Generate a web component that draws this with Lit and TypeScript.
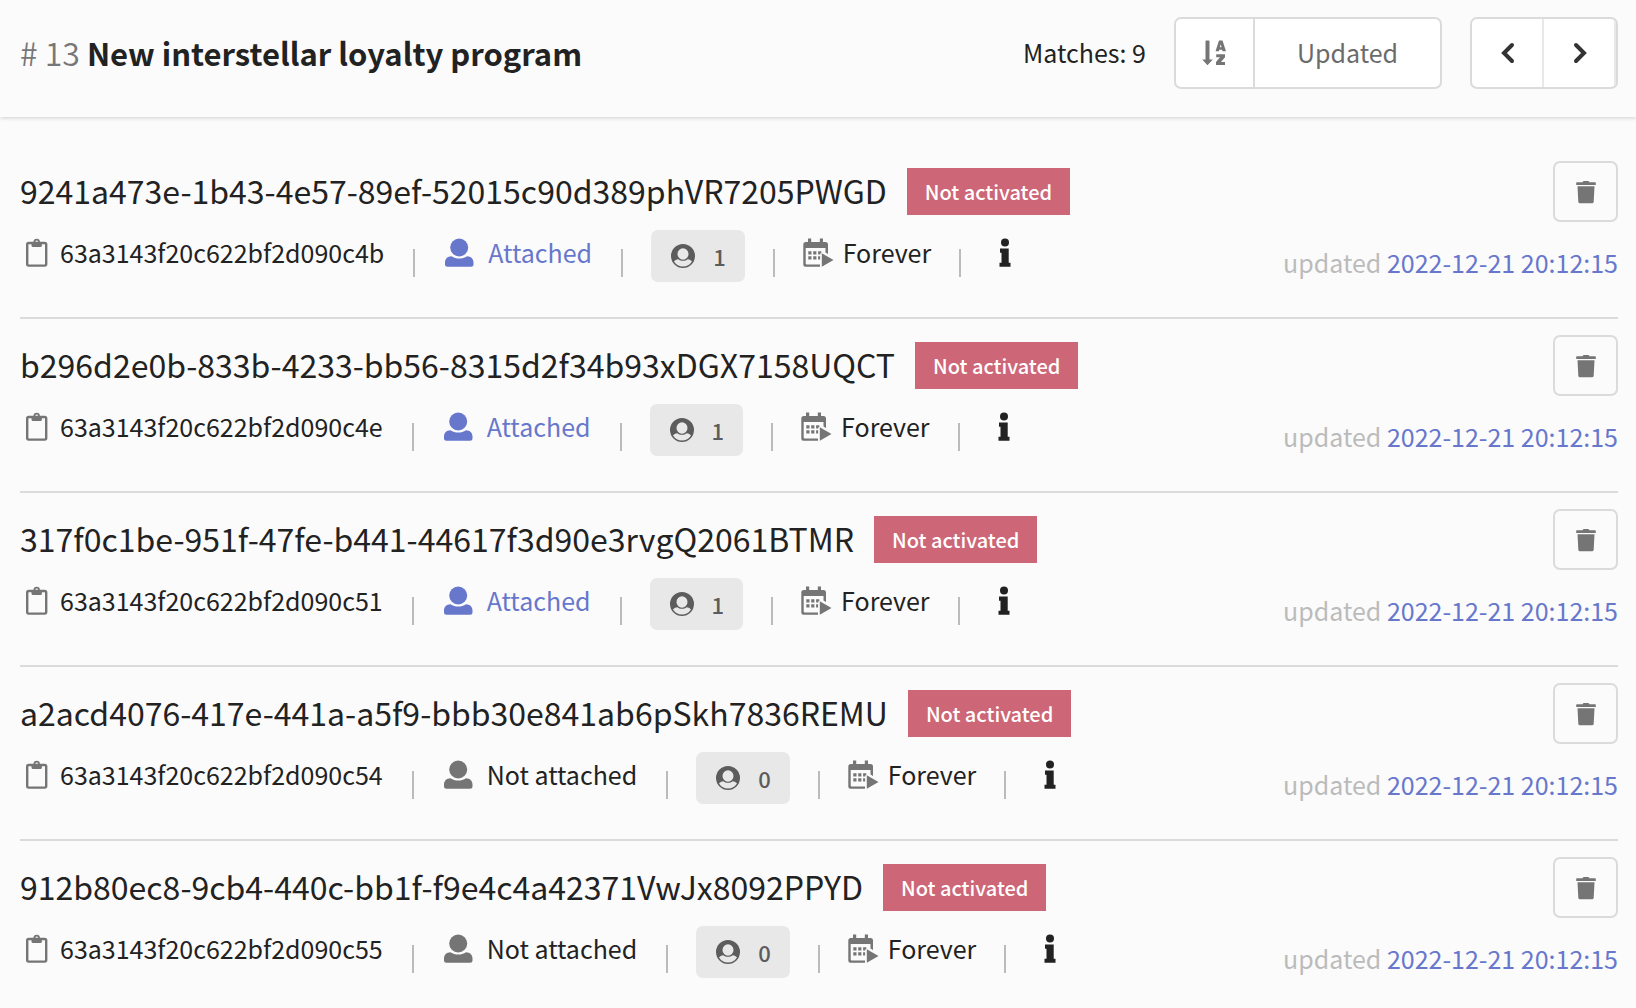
import { LitElement, html, css, svg } from "lit";
import { customElement, property } from "lit/decorators.js";

interface Code {
  code: string;
  id: string;
  attached: boolean;
  uses: number;
  updated: string;
}

const STAMP = "2022-12-21 20:12:15";

const CODES: Code[] = [
  { code: "9241a473e-1b43-4e57-89ef-52015c90d389phVR7205PWGD", id: "63a3143f20c622bf2d090c4b", attached: true, uses: 1, updated: STAMP },
  { code: "b296d2e0b-833b-4233-bb56-8315d2f34b93xDGX7158UQCT", id: "63a3143f20c622bf2d090c4e", attached: true, uses: 1, updated: STAMP },
  { code: "317f0c1be-951f-47fe-b441-44617f3d90e3rvgQ2061BTMR", id: "63a3143f20c622bf2d090c51", attached: true, uses: 1, updated: STAMP },
  { code: "a2acd4076-417e-441a-a5f9-bbb30e841ab6pSkh7836REMU", id: "63a3143f20c622bf2d090c54", attached: false, uses: 0, updated: STAMP },
  { code: "912b80ec8-9cb4-440c-bb1f-f9e4c4a42371VwJx8092PPYD", id: "63a3143f20c622bf2d090c55", attached: false, uses: 0, updated: STAMP },
];

const icon = (w: number, h: number, body: unknown) => html`<svg
  class="icon" width=${w} height=${h} viewBox="0 0 ${w} ${h}" fill="currentColor" aria-hidden="true">${body}</svg>`;

const clipboardIcon = icon(22, 30, svg`
  <rect fill="none" stroke="currentColor" stroke-width="2.400" x="1.200" y="5" width="19" height="22.600" rx="1.500"/>
  <path fill-rule="evenodd" d="M5.500 4h2a3.200 3.200 0 0 1 6.400 0h2v3.500a1.500 1.500 0 0 1-1.500 1.500H7a1.500 1.500 0 0 1-1.500-1.500zM10.700 2.500a1.300 1.300 0 1 0 0 2.600a1.300 1.300 0 0 0 0-2.600z"/>`);

const userIcon = icon(30, 30, svg`
  <circle cx="15.200" cy="9.500" r="9"/>
  <path d="M7.500 18.200c4.500 3.100 11 3.100 15.500 0c4 .3 6.500 2.500 6.500 6.300v1.700a2.500 2.500 0 0 1-2.500 2.500H3.500A2.500 2.500 0 0 1 1 26.200v-1.700c0-3.800 2.500-6 6.500-6.300z"/>`);

const usesIcon = icon(24, 24, svg`
  <path fill-rule="evenodd" d="M12 0a12 12 0 1 0 0 24a12 12 0 0 0 0-24zM12 4.200a5.500 5.800 0 0 1 5.500 5.800a5.500 5.800 0 0 1-11 0a5.500 5.800 0 0 1 5.500-5.800zM7.300 15.300c2.800 2 6.600 2 9.400 0c1.900.3 3.400 1.100 4.300 2.300a10.600 10.600 0 0 1-18 0c.9-1.200 2.400-2 4.300-2.300z"/>`);

const calendarIcon = icon(31, 30, svg`
  <path fill-rule="evenodd" d="M5 .5h3.200V4h8.600V.5H20V4h2.500A2.500 2.500 0 0 1 25 6.500V16l-2.500-1.500V10H2.700v15.500a1 1 0 0 0 1 1H17v2.300H2.500A2.200 2.200 0 0 1 .3 26.500v-20A2.500 2.500 0 0 1 2.800 4H5z"/>
  <path d="M5.300 13.200h3.200v3.200H5.300zM10.200 13.200h3.200v3.200h-3.200zM15.100 13.200h3.200v2h-1v1.200h-2.200zM5.300 18.200h3.200v3.200H5.300zM10.200 18.200h3.200v3.200h-3.200zM15.100 18.200h2v3.200h-2z"/>
  <path d="M18.800 15.300L30.500 22L18.800 28.700z"/>`);

const infoIcon = icon(12, 30, svg`
  <circle cx="6" cy="4.500" r="4"/>
  <path d="M1 10.500h8.700v14.200h1.800v4H.5v-4h2v-10H1z"/>`);

const sortIcon = icon(24, 26, svg`
  <path d="M3.500 1.200a.8.8 0 0 1 .8-.8h2.400a.8.8 0 0 1 .8.8V19.500h3.300L5.500 25.200L.2 19.500h3.300z"/>
  <path fill-rule="evenodd" d="M17 .5h3.500L24 11.300h-3.400l-.5-1.600h-2.800l-.5 1.600h-3.300zM18.700 4.300L17.900 7.300h1.600z"/>
  <path d="M14.200 14.300h8.800v3l-4 4.700h4v3h-9v-3l4-4.700h-3.800z"/>`);

const prevIcon = icon(14, 22, svg`<path fill="none" stroke="currentColor" stroke-width="4" stroke-linecap="round" d="M11 3L3 11L11 19"/>`);
const nextIcon = icon(14, 22, svg`<path fill="none" stroke="currentColor" stroke-width="4" stroke-linecap="round" d="M3 3L11 11L3 19"/>`);

const trashIcon = icon(20, 24, svg`
  <path d="M.8 2.300h5.700L7.500 1h5l1 1.300h5.700a.6.6 0 0 1 .6.6V5H.2V2.900a.6.6 0 0 1 .6-.6z"/>
  <path d="M1.500 6.300h17L17.700 21.800a1.700 1.700 0 0 1-1.700 1.500H4a1.700 1.700 0 0 1-1.700-1.500z"/>`);

@customElement("code-row")
class CodeRow extends LitElement {
  @property({ attribute: false }) item!: Code;

  static styles = css`
    :host { display: flex; justify-content: space-between; padding: 16px 0 33px; border-bottom: 2px solid #dbdbdb; }
    .icon { display: block; flex: none; }
    .heading { display: flex; align-items: center; height: 60px; gap: 20px; }
    .code { margin: 0; font-size: 32px; line-height: 56px; padding-bottom: 2px; font-weight: 400; }
    .badge { background: #cd6676; color: #fff; font-size: 20px; font-weight: 500; line-height: 47px; padding: 0 18px; }
    .meta { display: flex; align-items: flex-start; margin-top: 9px; }
    .cell { display: flex; align-items: center; height: 46px; color: #222; text-decoration: none; line-height: 44px; }
    .cell .label { padding-bottom: 2px; }
    .cell .icon { color: #757575; }
    .id { gap: 12px; padding: 0 1px 0 6px; }
    .owner { gap: 14px; padding: 0 1px; }
    .linked, .cell.linked .icon { color: #6777cc; }
    .period { gap: 9px; }
    .divider { width: 2px; height: 28px; margin: 19px 28px 0; background: #bbb; }
    .uses { display: flex; align-items: center; gap: 18px; height: 52px; padding: 0 19px 0 20px; border-radius: 7px; background: #e8e8e8; color: #5c5c5c; font-size: 22px; font-weight: 500; line-height: 52px; }
    .info { display: flex; align-items: center; height: 46px; padding: 0 10px; border: 0; background: none; color: #222; }
    .side { display: flex; flex-direction: column; align-items: flex-end; }
    .remove { display: flex; align-items: center; justify-content: center; width: 65px; height: 61px; padding: 0; border: 2px solid #dbdbdb; border-radius: 7px; background: none; color: #757575; }
    .updated { margin: 18px 0 0; line-height: 44px; color: #bbb; }
    .time { color: #6777cc; text-decoration: none; }
  `;

  render() {
    const c = this.item;
    const owner = c.attached
      ? html`<a class="cell owner linked" href="#owner">${userIcon}<span class="label">Attached</span></a>`
      : html`<span class="cell owner">${userIcon}<span class="label">Not attached</span></span>`;
    return html`
      <div class="main">
        <div class="heading">
          <h2 class="code">${c.code}</h2>
          <span class="badge">Not activated</span>
        </div>
        <div class="meta">
          <span class="cell id">${clipboardIcon}<span class="label">${c.id}</span></span>
          <span class="divider"></span>
          ${owner}
          <span class="divider"></span>
          <span class="uses">${usesIcon}<span>${c.uses}</span></span>
          <span class="divider"></span>
          <span class="cell period">${calendarIcon}<span class="label">Forever</span></span>
          <span class="divider"></span>
          <button class="info" type="button" aria-label="Details">${infoIcon}</button>
        </div>
      </div>
      <div class="side">
        <button class="remove" type="button" aria-label="Delete">${trashIcon}</button>
        <p class="updated">updated <a class="time" href="#history">${c.updated}</a></p>
      </div>`;
  }
}

@customElement("app-root")
class AppRoot extends LitElement {
  static styles = css`
    :host { display: block; min-height: 100vh; background: #fbfbfb; color: #222; font-family: "Noto Sans CJK SC", "Noto Sans", sans-serif; font-size: 25px; }
    .icon { display: block; flex: none; }
    .bar { display: flex; align-items: center; justify-content: space-between; padding: 17px 18px 28px 20px; box-shadow: 0 1px 4px rgba(0, 0, 0, 0.18); }
    .title { margin: 0; font-size: 31px; line-height: 64px; padding-bottom: 2px; font-weight: 700; }
    .number { color: #777; font-size: 32px; font-weight: 350; }
    .tools { display: flex; align-items: center; gap: 28px; }
    .matches { line-height: 64px; padding-bottom: 2px; }
    .group { display: flex; height: 72px; box-sizing: border-box; border: 2px solid #dbdbdb; border-radius: 7px; background: #fff; overflow: hidden; }
    .button { display: flex; align-items: center; justify-content: center; box-sizing: border-box; padding: 0; border: 0; background: none; color: #6b6b6b; font: inherit; line-height: 64px; }
    .button + .button { border-left: 2px solid #dbdbdb; }
    .order { width: 77px; padding-right: 2px; color: #757575; }
    .field { width: 187px; padding-bottom: 2px; }
    .page { width: 70px; padding-left: 2px; color: #333; }
    .page + .page { width: 74px; border-right: 2px solid #e8e8e8; border-left-color: #e8e8e8; }
    .list { display: block; padding: 28px 18px 0 20px; }
    .list code-row:last-child { border-bottom: 0; padding-bottom: 0; }
  `;

  render() {
    return html`
      <header class="bar">
        <h1 class="title"><span class="number"># 13</span> New interstellar loyalty program</h1>
        <div class="tools">
          <span class="matches">Matches: 9</span>
          <div class="group">
            <button class="button order" type="button" aria-label="Sort order">${sortIcon}</button>
            <button class="button field" type="button">Updated</button>
          </div>
          <div class="group">
            <button class="button page" type="button" aria-label="Previous">${prevIcon}</button>
            <button class="button page" type="button" aria-label="Next">${nextIcon}</button>
          </div>
        </div>
      </header>
      <main class="list">${CODES.map((c) => html`<code-row .item=${c}></code-row>`)}</main>`;
  }
}
